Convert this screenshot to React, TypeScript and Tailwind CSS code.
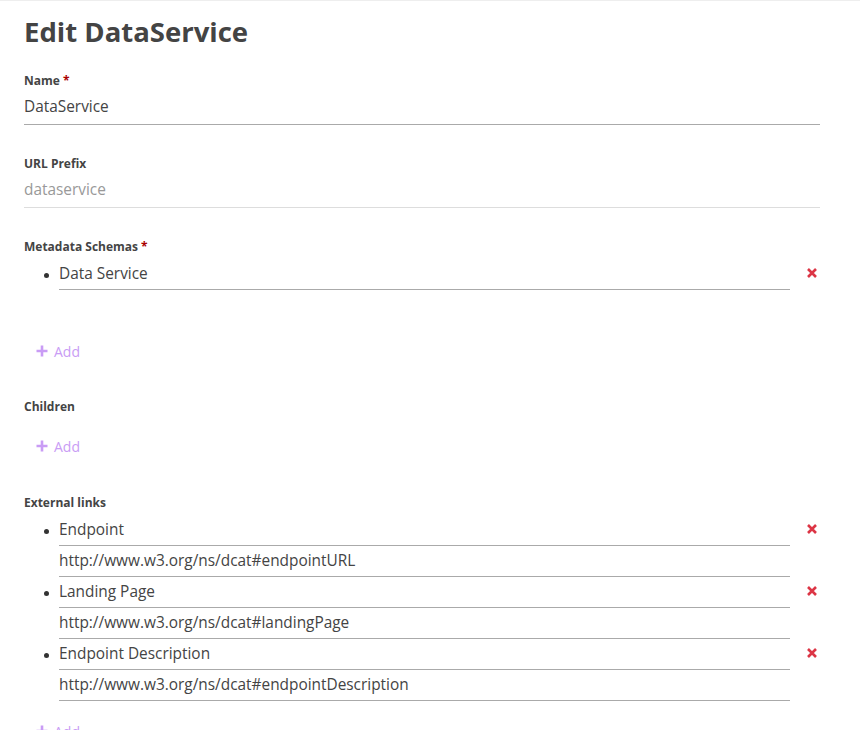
import React from 'react'

const font = { fontFamily: '"Open Sans", "Noto Sans", sans-serif' }

const links = [
  { title: 'Endpoint', url: 'http://www.w3.org/ns/dcat#endpointURL' },
  { title: 'Landing Page', url: 'http://www.w3.org/ns/dcat#landingPage' },
  { title: 'Endpoint Description', url: 'http://www.w3.org/ns/dcat#endpointDescription' },
]

function Label({ text, required }: { text: string; required?: boolean }) {
  return (
    <div className="text-[12px] leading-[18px] font-bold text-[#444]">
      {text}
      {required && <span className="text-[#a00] ml-[3px]">*</span>}
    </div>
  )
}

// single field: a bit more padding than list rows
function Field({ value, muted }: { value: string; muted?: boolean }) {
  return (
    <div
      className={
        'pt-[5px] pb-[5px] text-[15.4px] leading-[24px] border-b ' +
        (muted ? 'text-[#999] border-[#ddd]' : 'text-[#444] border-[#aaa]')
      }
    >
      {value}
    </div>
  )
}

function Line({ value }: { value: string }) {
  return (
    <div className="pt-[3px] pb-[3px] text-[15.4px] leading-[24px] border-b text-[#444] border-[#aaa]">
      {value}
    </div>
  )
}

function RemoveIcon() {
  return (
    <svg width="12" height="12" viewBox="0 0 12 12" className="text-[#dc3545]">
      <path d="M2 2L10 10M10 2L2 10" stroke="currentColor" strokeWidth="2.6" />
    </svg>
  )
}

function Item({ children }: { children: React.ReactNode }) {
  return (
    <div className="flex items-start">
      <div className="w-[35px] flex justify-end pr-[10px] pt-[14px]">
        <span className="w-[5px] h-[5px] rounded-full bg-[#333]" />
      </div>
      <div className="flex-1">{children}</div>
      <div className="w-[30px] flex justify-end pr-[2px] pt-[8px]">
        <RemoveIcon />
      </div>
    </div>
  )
}

function AddButton() {
  return (
    <button className="flex items-center gap-[6px] pl-[12px] h-[24px] text-[14px] text-[#c99cf5]">
      <svg width="12" height="12" viewBox="0 0 12 12">
        <path d="M6 0.5V11.5M0.5 6H11.5" stroke="currentColor" strokeWidth="2.6" />
      </svg>
      Add
    </button>
  )
}

export default function App() {
  return (
    <div className="min-h-screen bg-white border-t border-[#eee] pl-6 pr-10 pt-[11px]" style={font}>
      <h1 className="text-[27.5px] leading-[40px] font-bold text-[#444]">Edit DataService</h1>

      <div className="mt-[20px]">
        <Label text="Name" required />
        <Field value="DataService" />
      </div>

      <div className="mt-[30px]">
        <Label text="URL Prefix" />
        <Field value="dataservice" muted />
      </div>

      <div className="mt-[30px]">
        <Label text="Metadata Schemas" required />
        <div className="mt-[3px]">
          <Item>
            <Line value="Data Service" />
          </Item>
        </div>
        <div className="mt-[49px]">
          <AddButton />
        </div>
      </div>

      <div className="mt-[35px]">
        <Label text="Children" />
        <div className="mt-[18px]">
          <AddButton />
        </div>
      </div>

      <div className="mt-[36px]">
        <Label text="External links" />
        <div className="mt-[3px]">
          {links.map(l => (
            <Item key={l.title}>
              <Line value={l.title} />
              <Line value={l.url} />
            </Item>
          ))}
        </div>
        <div className="mt-[18px]">
          <AddButton />
        </div>
      </div>
    </div>
  )
}
